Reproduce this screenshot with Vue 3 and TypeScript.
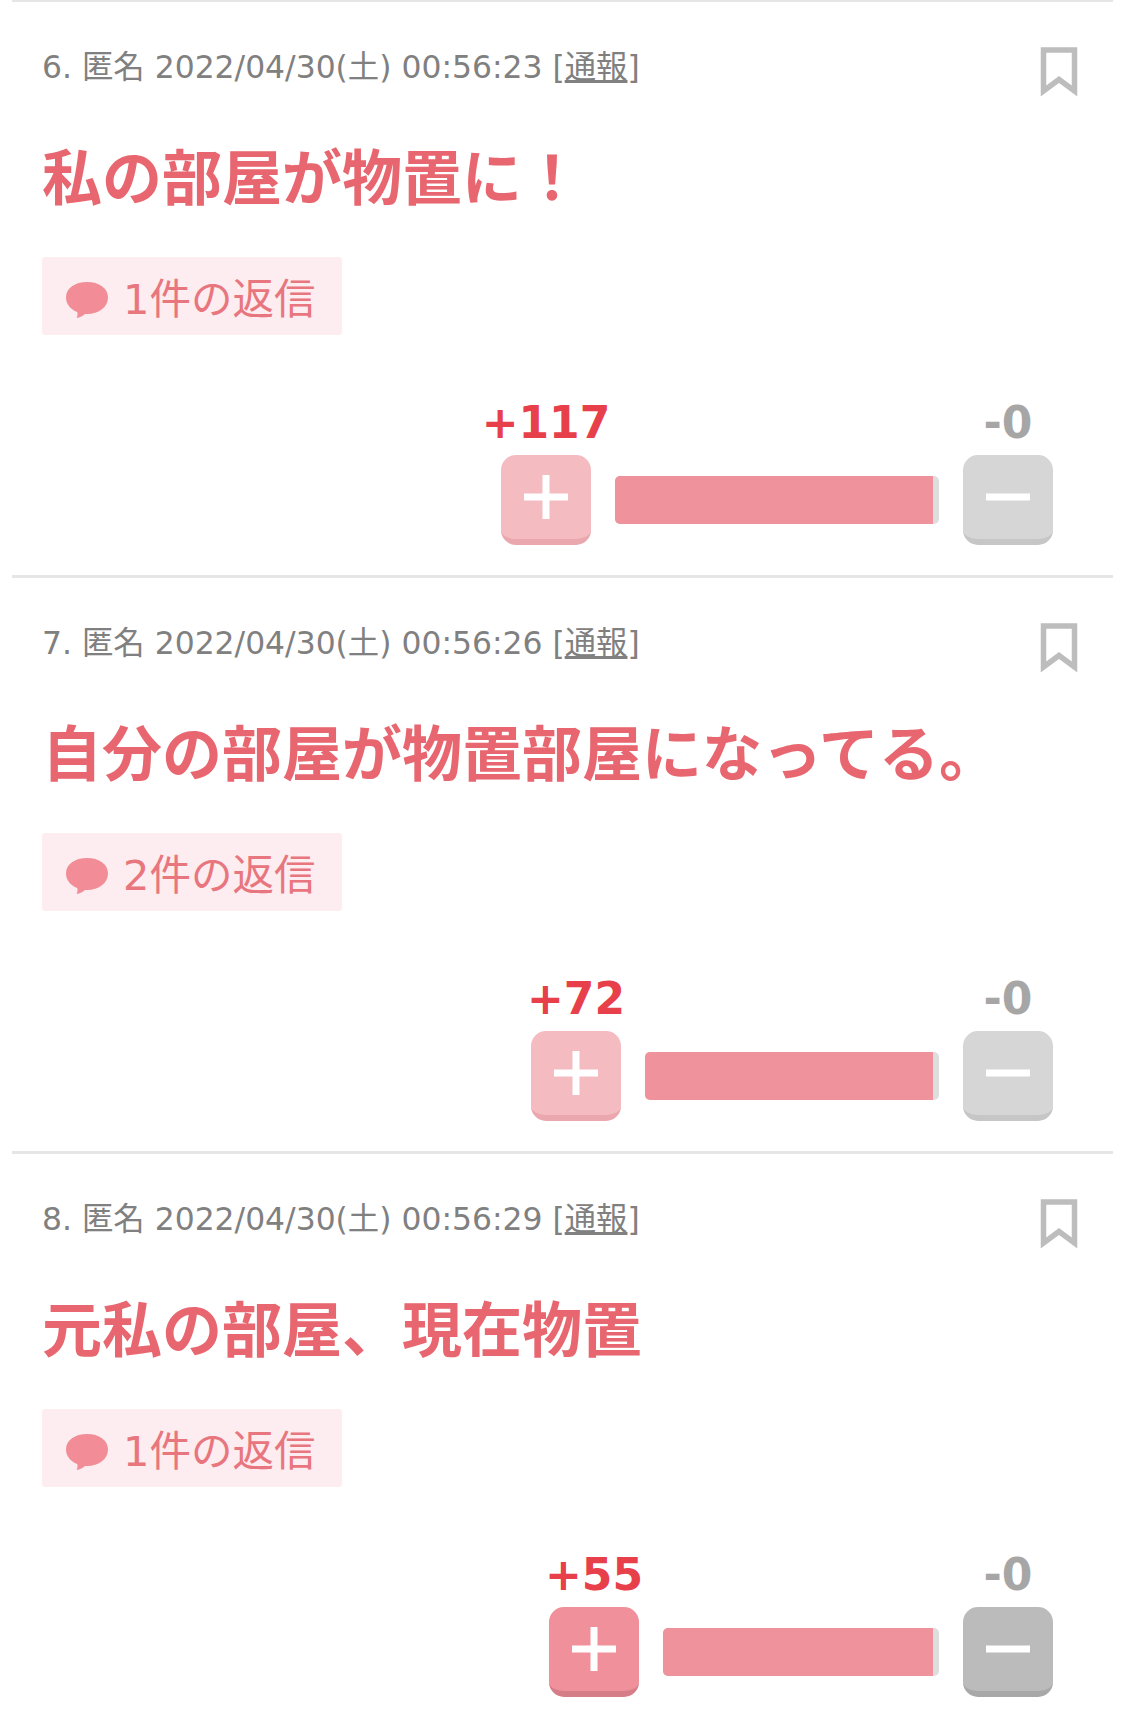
<script setup lang="ts">
interface Comment {
  no: number
  time: string
  body: string
  replies: number
  plus: number
  minus: number
  barWidth: number
  voted: boolean
}

const comments: Comment[] = [
  { no: 6, time: '00:56:23', body: '私の部屋が物置に！', replies: 1, plus: 117, minus: 0, barWidth: 324, voted: false },
  { no: 7, time: '00:56:26', body: '自分の部屋が物置部屋になってる。', replies: 2, plus: 72, minus: 0, barWidth: 294, voted: false },
  { no: 8, time: '00:56:29', body: '元私の部屋、現在物置', replies: 1, plus: 55, minus: 0, barWidth: 276, voted: true },
]
</script>

<template>
  <div class="list">
    <article v-for="c in comments" :key="c.no" class="comment">
      <div class="meta">
        <span>{{ c.no }}. 匿名 2022/04/30(土) {{ c.time }} [<a class="report">通報</a>]</span>
        <svg class="bookmark" width="38" height="50" viewBox="0 0 38 50">
          <path d="M3.500 4H34.500V45L19 33.500L3.500 45Z" fill="none" stroke="#bdbdbd" stroke-width="5.500" />
        </svg>
      </div>
      <h3 class="body">{{ c.body }}</h3>
      <div class="replies">
        <svg class="bubble" width="42" height="36" viewBox="0 0 42 36">
          <path d="M21 0C33 0 42 6 42 15.500C42 25 33 32 21 32C20 32 19.500 32 19 32C16.500 34 14 35.500 10.500 36C11.500 34 11.800 32 11.200 30C4.500 27.500 0 22 0 15.500C0 6 9 0 21 0Z" fill="#f28d97" />
        </svg>
        <span class="replies-text">{{ c.replies }}件の返信</span>
      </div>
      <div class="votes">
        <div class="vote">
          <span class="count plus-count">+{{ c.plus }}</span>
          <button class="btn plus" :class="{ voted: c.voted }">
            <svg width="44" height="44" viewBox="0 0 44 44"><path d="M0 22H44M22 0V44" stroke="#fff" stroke-width="7" /></svg>
          </button>
        </div>
        <div class="bar" :style="{ width: c.barWidth + 'px' }">
          <div class="bar-fill"></div>
        </div>
        <div class="vote">
          <span class="count minus-count">-{{ c.minus }}</span>
          <button class="btn minus" :class="{ voted: c.voted }">
            <svg width="44" height="44" viewBox="0 0 44 44"><path d="M0 22H44" stroke="#fff" stroke-width="7" /></svg>
          </button>
        </div>
      </div>
    </article>
  </div>
</template>

<style scoped>
.list {
  width: 1125px;
  height: 1710px;
  overflow: hidden;
  background: #fff;
  font-family: "DejaVu Sans", "Noto Sans CJK JP", sans-serif;
}
.comment {
  margin: 0 12px;
  padding: 45px 60px 30px 30px;
  height: 576px;
  box-sizing: border-box;
  border-top: 3px solid #e6e6e6;
  display: flex;
  flex-direction: column;
}
.comment:first-child { margin-top: -1px; }
.meta {
  flex: none;
  height: 40px;
  display: flex;
  justify-content: space-between;
  align-items: flex-start;
  font-size: 31.400px;
  line-height: 40px;
  color: #808080;
  margin-right: -25px;
}
.report { text-decoration: underline; }
.bookmark { flex: none; margin-top: -1px; }
.body {
  flex: none;
  margin: 47px 0 0;
  font-size: 60px;
  line-height: 80px;
  font-weight: 700;
  color: #e8666f;
  font-family: "Noto Sans CJK JP", sans-serif;
  white-space: nowrap;
}
.replies {
  flex: none;
  align-self: flex-start;
  margin-top: 43px;
  width: 300px;
  height: 78px;
  box-sizing: border-box;
  padding: 0 24px;
  display: flex;
  align-items: center;
  gap: 15px;
  background: #fdecf0;
  border-radius: 3px;
  color: #e8767e;
  font-size: 41.500px;
  line-height: 60px;
  white-space: nowrap;
}
.replies-text { margin-top: 7px; }
.bubble { flex: none; margin-top: 7px; }
.votes {
  flex: none;
  margin-top: 67px;
  display: flex;
  justify-content: flex-end;
  align-items: flex-end;
  gap: 24px;
}
.vote {
  width: 90px;
  display: flex;
  flex-direction: column;
  align-items: center;
  gap: 11px;
}
.count {
  font-size: 44px;
  line-height: 42px;
  font-weight: 700;
  white-space: nowrap;
}
.plus-count { color: #e8404a; }
.minus-count { color: #a6a6a6; }
.btn {
  width: 90px;
  height: 90px;
  padding: 0;
  box-sizing: border-box;
  border: none;
  border-bottom: 6px solid;
  border-radius: 15px;
  display: flex;
  align-items: center;
  justify-content: center;
}
.plus { background: #f4bbc1; border-color: #eaa7ae; }
.plus.voted { background: #f0909b; border-color: #d67e88; }
.minus { background: #d6d6d6; border-color: #c6c6c6; }
.minus.voted { background: #bbbbbb; border-color: #a8a8a8; }
.bar {
  height: 48px;
  margin-bottom: 21px;
  background: #dedede;
  border-radius: 5px;
  overflow: hidden;
}
.bar-fill {
  width: 98%;
  height: 100%;
  background: #f0929b;
}
</style>

<style>
html, body { background: #fff; }
</style>
